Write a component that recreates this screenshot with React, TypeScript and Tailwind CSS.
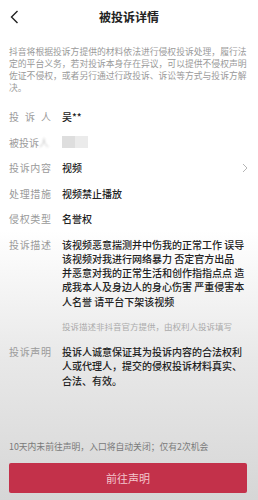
import React from "react";

const font = { fontFamily: '"Noto Sans CJK SC", "Noto Sans", sans-serif' };

function Label({ text }: { text: string }) {
  return (
    <span className="flex w-[42px] shrink-0 justify-between text-[10px] text-[#9a9a9a]">
      {text.split("").map((c, i) => (
        <span key={i}>{c}</span>
      ))}
    </span>
  );
}

function Row({ label, children, arrow = false }: { label: string; children: React.ReactNode; arrow?: boolean }) {
  return (
    <div className="flex h-[25.5px] items-center">
      <Label text={label} />
      <div className="ml-[11px] flex flex-1 items-center text-[10px] font-medium text-[#222]">{children}</div>
      {arrow && (
        <svg width="6" height="10" viewBox="0 0 6 10" className="mr-[10px]">
          <path d="M1 1l4 4-4 4" fill="none" stroke="#b5b5b5" strokeWidth="1" />
        </svg>
      )}
    </div>
  );
}

const desc = [
  "该视频恶意揣测并中伤我的正常工作 误导",
  "该视频对我进行网络暴力 否定官方出品",
  "并恶意对我的正常生活和创作指指点点 造",
  "成我本人及身边人的身心伤害 严重侵害本",
  "人名誉 请平台下架该视频",
];

export default function App() {
  return (
    <div
      style={font}
      className="flex h-[500px] w-full flex-col bg-[linear-gradient(180deg,#ffffff_0%,#ffffff_46%,#e8e8e8_72%,#d6d6d6_100%)]"
    >
      <div className="relative flex h-[34px] items-center justify-center">
        <svg width="9" height="14" viewBox="0 0 9 14" className="absolute left-[10px] top-[10px]">
          <path d="M7.5 1L1.5 7l6 6" fill="none" stroke="#222" strokeWidth="1.4" />
        </svg>
        <span className="text-[12px] font-bold text-[#222]">被投诉详情</span>
      </div>

      <p className="mt-[12px] px-[9px] text-[8.8px] leading-[12px] text-[#9a9a9a]">
        抖音将根据投诉方提供的材料依法进行侵权投诉处理，履行法定的平台义务，若对投诉本身存在异议，可以提供不侵权声明佐证不侵权，或者另行通过行政投诉、诉讼等方式与投诉方解决。
      </p>

      <div className="mt-[10px] flex flex-col pl-[9px]">
        <Row label="投诉人">吴**</Row>
        <div className="flex h-[25.5px] items-center">
          <span className="flex w-[42px] shrink-0 text-[10px] text-[#9a9a9a]">
            被投诉<span className="opacity-60 blur-[1px]">人</span>
          </span>
          <div className="ml-[11px] flex h-[12px]">
            <span className="w-[13px] bg-[#dedede]" />
            <span className="w-[13px] bg-[#ebebeb]" />
          </div>
        </div>
        <Row label="投诉内容" arrow>
          视频
        </Row>
        <Row label="处理措施">视频禁止播放</Row>
        <Row label="侵权类型">名誉权</Row>
      </div>

      <div className="mt-[6px] flex pl-[9px] pr-[10px]">
        <div className="leading-[14px]">
          <Label text="投诉描述" />
        </div>
        <div className="ml-[11px] flex-1">
          <p className="whitespace-nowrap text-[10px] font-medium leading-[14.3px] text-[#222]">
            {desc.map((l, i) => (
              <span key={i} className="block">
                {l}
              </span>
            ))}
          </p>
          <p className="mt-[11px] text-[8.5px] leading-[12px] text-[#ababab]">
            投诉描述非抖音官方提供，由权利人投诉填写
          </p>
        </div>
      </div>

      <div className="mt-[13px] flex pl-[9px] pr-[12px]">
        <div className="leading-[14px]">
          <Label text="投诉声明" />
        </div>
        <p className="ml-[11px] flex-1 text-[10px] font-medium leading-[14.5px] text-[#222]">
          投诉人诚意保证其为投诉内容的合法权利人或代理人，提交的侵权投诉材料真实、合法、有效。
        </p>
      </div>

      <p className="mt-auto px-[9px] text-[8.8px] leading-[12px] text-[#7a7a7a]">
        10天内未前往声明，入口将自动关闭；仅有2次机会
      </p>
      <button className="mb-[7px] ml-[9px] mr-[11px] mt-[10px] flex h-[30px] items-center justify-center rounded-[2px] bg-[#c3314a] text-[11px] text-[#f2c6cd]">
        前往声明
      </button>
    </div>
  );
}
